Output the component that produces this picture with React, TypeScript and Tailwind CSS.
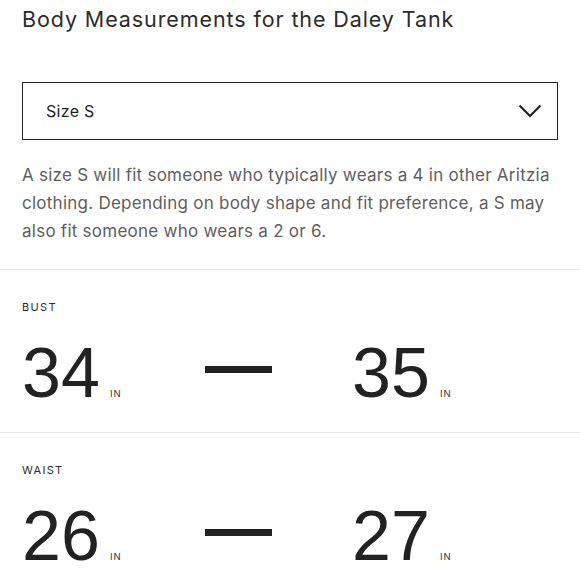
const sans = "font-['Inter','Noto_Sans',sans-serif]";
const digits = "font-['Liberation_Sans','Arial',sans-serif]";

type Range = { label: string; min: number; max: number };

const ranges: Range[] = [
  { label: "BUST", min: 34, max: 35 },
  { label: "WAIST", min: 26, max: 27 },
];

function Value({ n }: { n: number }) {
  return (
    <div className="flex items-baseline">
      <span className={`${digits} text-[70px] leading-[70px] text-[#222]`}>{n}</span>
      <span className={`${sans} ml-[10px] text-[9.5px] tracking-[0.1em] text-[#333]`}>IN</span>
    </div>
  );
}

function MeasureRow({ r }: { r: Range }) {
  return (
    <section className="border-t border-[#e8e8e8] px-[22px] pt-[29px] pb-[24px]">
      <div className={`${sans} text-[11px] leading-[16px] tracking-[0.12em] text-[#2b2b2b]`}>
        {r.label}
      </div>
      <div className="mt-[23px] flex items-center">
        <div className="w-[183px]">
          <Value n={r.min} />
        </div>
        <div className="mb-[8px] h-[7px] w-[67px] bg-[#222]" />
        <div className="ml-[80px]">
          <Value n={r.max} />
        </div>
      </div>
    </section>
  );
}

export default function App() {
  return (
    <div className={`${sans} h-[580px] w-[580px] overflow-hidden bg-white`}>
      <div className="px-[22px] pt-[5px]">
        <h1 className="text-[21.5px] leading-[28px] font-normal tracking-[0.9px] text-[#2b2b2b]">
          Body Measurements for the Daley Tank
        </h1>
        <button
          type="button"
          className="mt-[49px] flex h-[58px] w-[536px] items-center justify-between border-[1.5px] border-[#222] pl-[23px] pr-[15px] text-left"
        >
          <span className="text-[16px] tracking-[0.3px] text-[#222]">Size S</span>
          <svg width="24" height="14" viewBox="0 0 24 14" fill="none">
            <path d="M1.5 1.5 L12 12 L22.5 1.5" stroke="#222" strokeWidth="2.2" />
          </svg>
        </button>
        <p className="mt-[21px] mb-[24px] text-[17px] leading-[28px] tracking-[0.25px] text-[#5e5e5e]">
          A size S will fit someone who typically wears a 4 in other Aritzia clothing. Depending
          on body shape and fit preference, a S may also fit someone who wears a 2 or 6.
        </p>
      </div>
      {ranges.map((r) => (
        <MeasureRow key={r.label} r={r} />
      ))}
    </div>
  );
}
